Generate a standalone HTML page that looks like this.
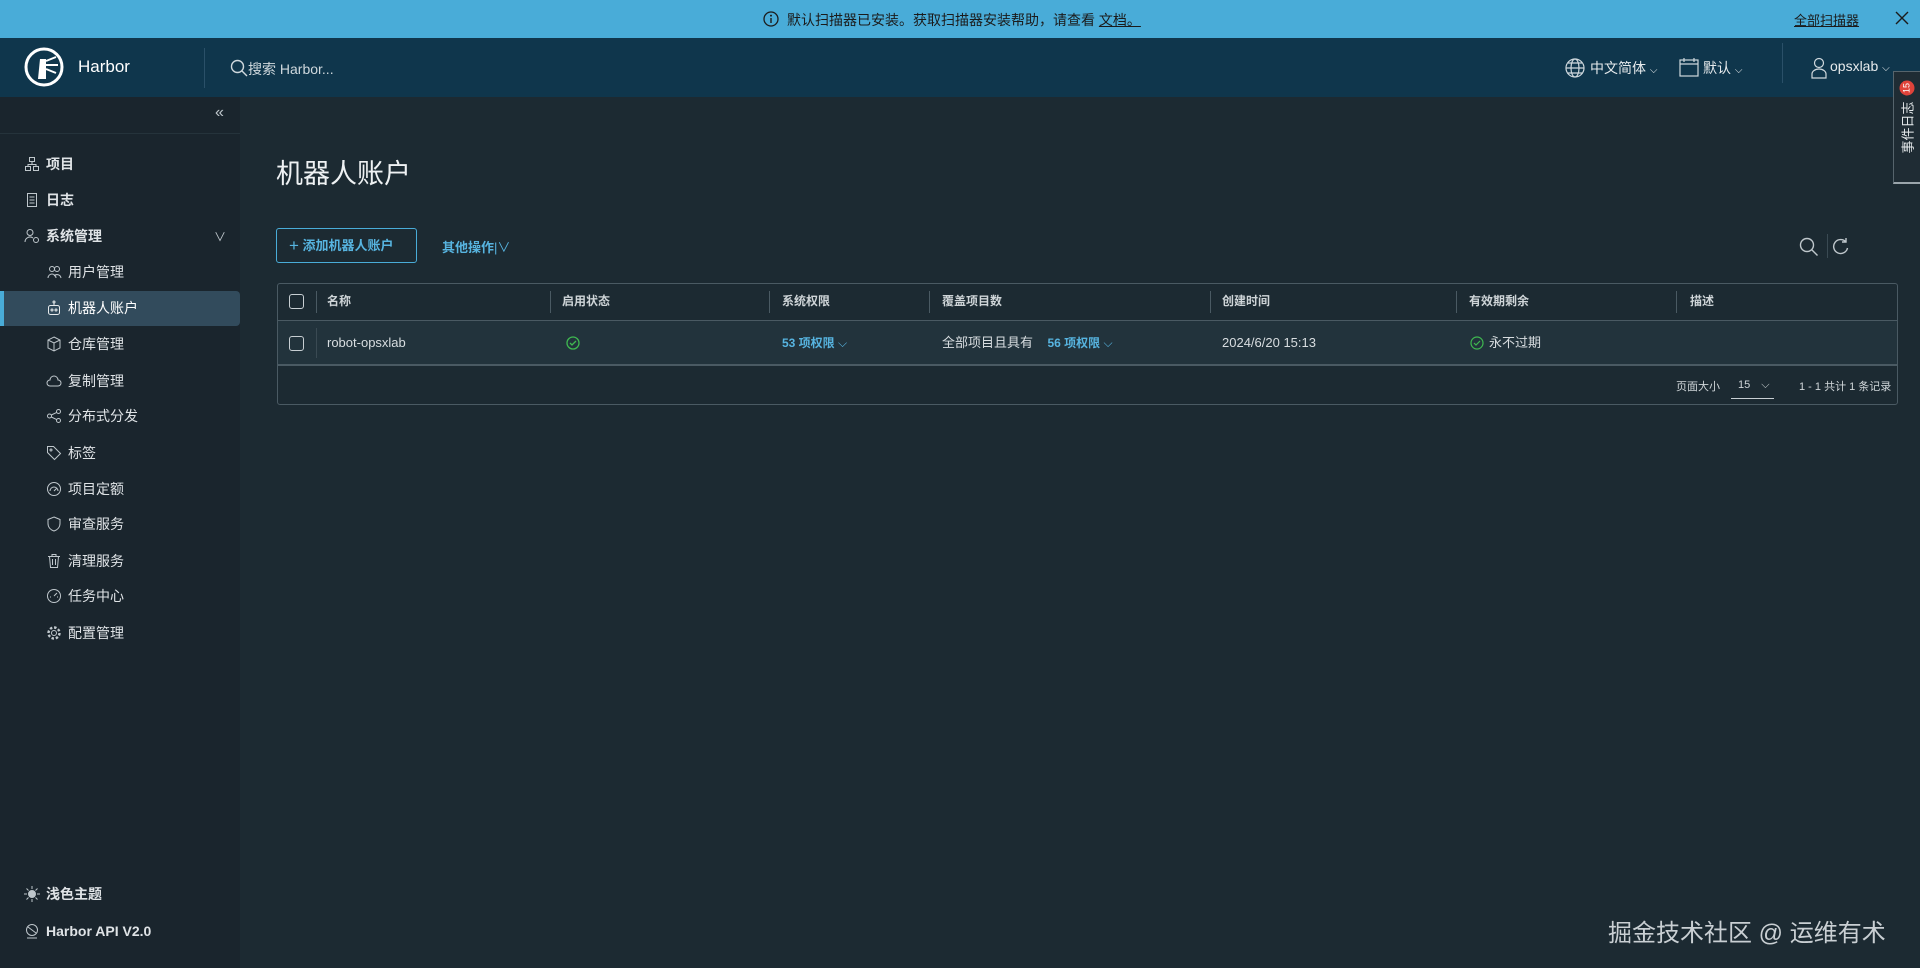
<!DOCTYPE html>
<html><head><meta charset="utf-8"><style>
*{box-sizing:border-box;margin:0;padding:0}
body{width:1920px;height:968px;overflow:hidden;background:#1c2a32;font-family:"Liberation Sans","Noto Sans CJK SC",sans-serif;color:#e6e9eb;position:relative}
.abs{position:absolute}
.banner{left:0;top:0;width:1920px;height:38px;background:#49acd8;color:#1b1b1b;font-size:14px}
.header{left:0;top:38px;width:1920px;height:59px;background:#0f364c}
.side{left:0;top:97px;width:240px;height:871px;background:#1a252d}
.nav{position:absolute;left:0;width:240px;height:34px;font-size:14px;font-weight:bold;color:#dfe3e6;display:flex;align-items:center}
.nav svg{margin-right:6px}
.sub{padding-left:46px;font-weight:normal}
.top{padding-left:24px}
.th{position:absolute;top:283px;height:37px;line-height:37px;font-size:12px;font-weight:bold;color:#cfd5d8}
.dv{position:absolute;top:291px;width:1px;height:22px;background:#4a5a63}
.td{position:absolute;top:320px;height:46px;line-height:46px;font-size:13px;color:#d8dde0}
.link{color:#57b4e0;font-weight:bold;font-size:12px}
svg{display:block}
</style></head><body>
<div class="abs banner">
 <svg class="abs" style="left:763px;top:11px" width="16" height="16" viewBox="0 0 16 16"><circle cx="8" cy="8" r="7" fill="none" stroke="#1b1b1b" stroke-width="1.3"/><rect x="7.3" y="7" width="1.4" height="5" fill="#1b1b1b"/><circle cx="8" cy="4.6" r="1" fill="#1b1b1b"/></svg>
 <div class="abs" style="left:787px;top:10px">默认扫描器已安装。获取扫描器安装帮助，请查看 <u>文档。</u></div>
 <div class="abs" style="left:1794px;top:10px;font-size:13px"><u>全部扫描器</u></div>
 <svg class="abs" style="left:1895px;top:11px" width="14" height="14" viewBox="0 0 14 14" stroke="#1b1b1b" stroke-width="1.4"><path d="M1 1l12 12M13 1L1 13"/></svg>
</div>
<div class="abs header">
 <svg class="abs" style="left:24px;top:9px" width="40" height="40" viewBox="0 0 40 40"><circle cx="20" cy="20" r="18" fill="none" stroke="#fff" stroke-width="3"/><path d="M16 12h6v20h-8z" fill="#fff"/><path d="M22 14l10-4M22 18l12 0M22 22l10 4" stroke="#fff" stroke-width="2"/></svg>
 <div class="abs" style="left:78px;top:19px;font-size:17px;color:#fff">Harbor</div>
 <div class="abs" style="left:204px;top:10px;width:1px;height:40px;background:#2a5068"></div>
 <svg class="abs" style="left:230px;top:21px" width="18" height="18" viewBox="0 0 18 18"><circle cx="7.5" cy="7.5" r="6" fill="none" stroke="#cfd8dd" stroke-width="1.4"/><path d="M12 12l5 5" stroke="#cfd8dd" stroke-width="1.4"/></svg>
 <div class="abs" style="left:248px;top:21px;font-size:14px;color:#cfd8dd">搜索 Harbor...</div>
 <svg class="abs" style="left:1565px;top:20px" width="20" height="20" viewBox="0 0 20 20" fill="none" stroke="#cfd8dd" stroke-width="1.2"><circle cx="10" cy="10" r="9"/><ellipse cx="10" cy="10" rx="4" ry="9"/><path d="M1 10h18M3 5h14M3 15h14"/></svg>
 <div class="abs" style="left:1590px;top:20px;font-size:14px;color:#e6eaec">中文简体 <span style="font-size:10px">⌵</span></div>
 <svg class="abs" style="left:1679px;top:19px" width="20" height="20" viewBox="0 0 20 20" fill="none" stroke="#cfd8dd" stroke-width="1.2"><rect x="1" y="3" width="18" height="16"/><path d="M5 1v4M15 1v4M1 7h18"/></svg>
 <div class="abs" style="left:1703px;top:20px;font-size:14px;color:#e6eaec">默认 <span style="font-size:10px">⌵</span></div>
 <div class="abs" style="left:1782px;top:5px;width:1px;height:40px;background:#2a5068"></div>
 <svg class="abs" style="left:1810px;top:19px" width="18" height="22" viewBox="0 0 18 22" fill="none" stroke="#cfd8dd" stroke-width="1.2"><circle cx="9" cy="6" r="4.5"/><path d="M2 21v-4a7 5 0 0 1 14 0v4z"/></svg>
 <div class="abs" style="left:1830px;top:20px;font-size:14px;color:#e6eaec">opsxlab <span style="font-size:10px">⌵</span></div>
</div>
<div class="abs side">
 <div class="abs" style="left:215px;top:7px;font-size:16px;color:#bfc7cc">«</div>
 <div class="abs" style="left:0;top:36px;width:240px;height:1px;background:#25333b"></div>
 <div class="nav top" style="top:50px"><svg width="16" height="16" viewBox="0 0 16 16" fill="none" stroke="#bfc7cc"><rect x="5.5" y="1.5" width="5" height="4"/><rect x="1.5" y="10.5" width="5" height="4"/><rect x="9.5" y="10.5" width="5" height="4"/><path d="M8 5.5v3M4 10.5v-2h8v2"/></svg>项目</div>
 <div class="nav top" style="top:86px"><svg width="16" height="16" viewBox="0 0 16 16" fill="none" stroke="#bfc7cc"><rect x="3.5" y="1.5" width="9" height="13"/><path d="M5.5 5h5M5.5 8h5M5.5 11h5"/></svg>日志</div>
 <div class="nav top" style="top:122px"><svg width="16" height="16" viewBox="0 0 16 16" fill="none" stroke="#bfc7cc"><circle cx="6" cy="4.5" r="3"/><path d="M1 14a5 5 0 0 1 8-4"/><circle cx="12" cy="12" r="2.5"/></svg>系统管理<span style="position:absolute;left:214px;font-size:12px;font-weight:normal;color:#bfc7cc">∨</span></div>
 <div class="nav sub" style="top:158px"><svg width="16" height="16" viewBox="0 0 16 16" fill="none" stroke="#bfc7cc"><circle cx="6" cy="5" r="2.5"/><circle cx="11" cy="5" r="2.5"/><path d="M2 14a4 4 0 0 1 8 0M8 12a4 4 0 0 1 7 2"/></svg>用户管理</div>
 <div class="abs" style="left:0;top:194px;width:240px;height:35px;background:#324b5c;border-radius:0 4px 4px 0;border-left:4px solid #49acd8"></div>
 <div class="nav sub" style="top:194px;color:#fff"><svg width="16" height="16" viewBox="0 0 16 16" fill="none" stroke="#e6eaec"><rect x="2.5" y="5.5" width="11" height="9" rx="2"/><circle cx="6" cy="10" r="1"/><circle cx="10" cy="10" r="1"/><path d="M8 5.5v-3"/><circle cx="8" cy="2" r="1"/></svg>机器人账户</div>
 <div class="nav sub" style="top:230px"><svg width="16" height="16" viewBox="0 0 16 16" fill="none" stroke="#bfc7cc"><path d="M8 1l6 3v8l-6 3-6-3V4zM2 4l6 3 6-3M8 7v8"/></svg>仓库管理</div>
 <div class="nav sub" style="top:267px"><svg width="16" height="16" viewBox="0 0 16 16" fill="none" stroke="#bfc7cc"><path d="M4 13a3 3 0 0 1 0-6 4 4 0 0 1 8 0 3 3 0 0 1 0 6z"/></svg>复制管理</div>
 <div class="nav sub" style="top:302px"><svg width="16" height="16" viewBox="0 0 16 16" fill="none" stroke="#bfc7cc"><circle cx="3.5" cy="8" r="2"/><circle cx="12.5" cy="3.5" r="2"/><circle cx="12.5" cy="12.5" r="2"/><path d="M5.3 7l5.4-2.6M5.3 9l5.4 2.6"/></svg>分布式分发</div>
 <div class="nav sub" style="top:339px"><svg width="16" height="16" viewBox="0 0 16 16" fill="none" stroke="#bfc7cc"><path d="M1.5 1.5h6l7 7-6 6-7-7z"/><circle cx="5" cy="5" r="1"/></svg>标签</div>
 <div class="nav sub" style="top:375px"><svg width="16" height="16" viewBox="0 0 16 16" fill="none" stroke="#bfc7cc"><circle cx="8" cy="8" r="6.5"/><path d="M4 10a4 4 0 0 1 8 0M8 10l3-3"/></svg>项目定额</div>
 <div class="nav sub" style="top:410px"><svg width="16" height="16" viewBox="0 0 16 16" fill="none" stroke="#bfc7cc"><path d="M8 1l6 2.5v4c0 4-3 6.5-6 7.5-3-1-6-3.5-6-7.5v-4z"/></svg>审查服务</div>
 <div class="nav sub" style="top:447px"><svg width="16" height="16" viewBox="0 0 16 16" fill="none" stroke="#bfc7cc"><path d="M2 3.5h12M6 3.5v-2h4v2M3.5 3.5l1 11h7l1-11M6.5 6v6M9.5 6v6"/></svg>清理服务</div>
 <div class="nav sub" style="top:482px"><svg width="16" height="16" viewBox="0 0 16 16" fill="none" stroke="#bfc7cc"><circle cx="8" cy="8" r="6.5"/><path d="M8 8l3-3M4 9h1M11 9h1"/></svg>任务中心</div>
 <div class="nav sub" style="top:519px"><svg width="16" height="16" viewBox="0 0 16 16" fill="none" stroke="#bfc7cc"><circle cx="8" cy="8" r="2.5"/><circle cx="8" cy="8" r="5.5" stroke-dasharray="2.5 1.8" stroke-width="2.4"/></svg>配置管理</div>
 <div class="nav top" style="top:780px"><svg width="16" height="16" viewBox="0 0 16 16" fill="#bfc7cc" stroke="#bfc7cc"><circle cx="8" cy="8" r="3.5"/><path d="M8 0v3M8 13v3M0 8h3M13 8h3M2.5 2.5l2 2M11.5 11.5l2 2M2.5 13.5l2-2M11.5 4.5l2-2"/></svg>浅色主题</div>
 <div class="nav top" style="top:817px"><svg width="16" height="16" viewBox="0 0 16 16" fill="none" stroke="#bfc7cc"><circle cx="8" cy="7" r="5.5"/><path d="M4 4l8 6M3 15h10"/></svg>Harbor API V2.0</div>
</div>
<div class="abs" style="left:276px;top:152px;font-size:27px;color:#eef1f3">机器人账户</div>
<div class="abs" style="left:276px;top:228px;width:141px;height:35px;border:1px solid #49acd8;border-radius:3px;color:#57b4e0;font-size:13px;font-weight:bold;line-height:33px;padding-left:12px"><span style="font-size:17px;font-weight:normal;vertical-align:-1px">+</span> 添加机器人账户</div>
<div class="abs" style="left:442px;top:237px;font-size:13px;font-weight:bold;color:#57b4e0">其他操作<span style="font-weight:normal">|∨</span></div>
<svg class="abs" style="left:1799px;top:237px" width="20" height="20" viewBox="0 0 20 20" fill="none" stroke="#bfc7cc" stroke-width="1.4"><circle cx="8" cy="8" r="6.5"/><path d="M12.5 12.5l6 6"/></svg>
<div class="abs" style="left:1827px;top:234px;width:1px;height:24px;background:#3a4a53"></div>
<svg class="abs" style="left:1832px;top:237px" width="18" height="20" viewBox="0 0 18 20" fill="none" stroke="#bfc7cc" stroke-width="1.4"><path d="M14 5a7 7 0 1 0 1.5 6M14 1v4h-4"/></svg>
<div class="abs" style="left:277px;top:283px;width:1621px;height:122px;border:1px solid #4a5a63;border-radius:3px"></div>
<div class="abs" style="left:278px;top:320px;width:1619px;height:46px;background:#22333c;border-top:1px solid #4a5a63;border-bottom:2px solid #4a5a63"></div>
<div class="abs" style="left:289px;top:294px;width:15px;height:15px;border:1.5px solid #c8cfd3;border-radius:3px"></div>
<div class="abs" style="left:289px;top:336px;width:15px;height:15px;border:1.5px solid #c8cfd3;border-radius:3px"></div>
<div class="dv" style="left:316px"></div><div class="dv" style="left:550px"></div><div class="dv" style="left:769px"></div><div class="dv" style="left:929px"></div><div class="dv" style="left:1210px"></div><div class="dv" style="left:1456px"></div><div class="dv" style="left:1676px"></div>
<div class="abs" style="left:316px;top:328px;width:1px;height:30px;background:#3a4a53"></div>
<div class="th" style="left:327px">名称</div><div class="th" style="left:562px">启用状态</div><div class="th" style="left:782px">系统权限</div><div class="th" style="left:942px">覆盖项目数</div><div class="th" style="left:1222px">创建时间</div><div class="th" style="left:1469px">有效期剩余</div><div class="th" style="left:1690px">描述</div>
<div class="td" style="left:327px">robot-opsxlab</div>
<svg class="abs" style="left:566px;top:336px" width="14" height="14" viewBox="0 0 14 14" fill="none" stroke="#3fb950" stroke-width="1.3"><circle cx="7" cy="7" r="6"/><path d="M4 7l2 2 4-4"/></svg>
<div class="td link" style="left:782px">53 项权限 <span style="font-weight:normal">⌵</span></div>
<div class="td" style="left:942px">全部项目且具有&nbsp;&nbsp;&nbsp; <span class="link">56 项权限 <span style="font-weight:normal">⌵</span></span></div>
<div class="td" style="left:1222px">2024/6/20 15:13</div>
<svg class="abs" style="left:1470px;top:336px" width="14" height="14" viewBox="0 0 14 14" fill="none" stroke="#3fb950" stroke-width="1.2"><circle cx="7" cy="7" r="6"/><path d="M4 7l2 2 4-4"/></svg>
<div class="td" style="left:1489px">永不过期</div>
<div class="abs" style="left:1676px;top:378px;font-size:11px;color:#d0d6d9">页面大小</div>
<div class="abs" style="left:1738px;top:379px;font-size:11px;color:#d0d6d9">15 <span style="margin-left:8px">⌵</span></div>
<div class="abs" style="left:1731px;top:398px;width:43px;height:1px;background:#c8cfd3"></div>
<div class="abs" style="left:1799px;top:378px;font-size:11px;color:#d0d6d9">1 - 1 共计 1 条记录</div>
<div class="abs" style="left:1608px;top:913px;font-size:24px;color:#c9cfd3">掘金技术社区 @ 运维有术</div>
<div class="abs" style="left:1893px;top:71px;width:27px;height:113px;background:#1f2c34;border:1px solid #56646c;border-right:none;border-bottom:2px solid #9aa5ab"></div>
<div class="abs" style="left:1850px;top:118px;width:113px;height:22px;transform:rotate(-90deg);display:flex;align-items:center;justify-content:flex-end;gap:6px;padding-right:8px;font-size:13px;color:#e6eaec">事件日志<span style="display:inline-block;width:15px;height:15px;border-radius:8px;background:#e0433a;color:#fff;font-size:9px;line-height:15px;text-align:center">15</span></div>
</body></html>
